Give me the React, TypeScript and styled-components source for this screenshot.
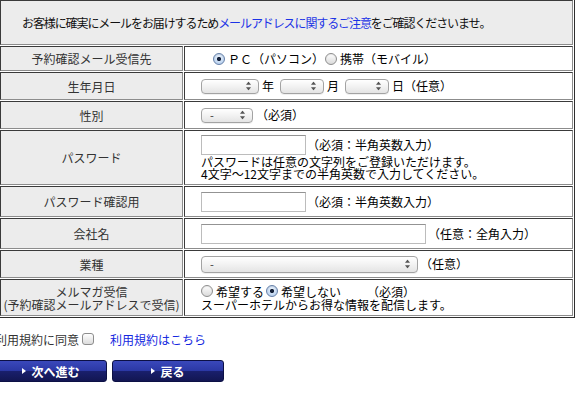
import React from "react";
import styled, { createGlobalStyle } from "styled-components";

const GlobalStyle = createGlobalStyle`
	html, body {
		margin: 0;
		padding: 0;
		background: #fff;
	}
	body {
		font-family: "Noto Sans CJK JP", "Noto Sans", sans-serif;
		font-size: 12px;
		color: #111;
		overflow: hidden;
	}
`;

const Page = styled.div`
	margin: -2px 0 0 -5px;
	width: 590px;
`;

const FormTable = styled.table`
	margin-left: 3px;
	width: 577px;
	border-collapse: separate;
	border-spacing: 1px;
	border: 1px solid;
	border-color: #c4c4c4 #2e2e2e #2e2e2e #c4c4c4;
`;

const Row = styled.tr<{ $h: number }>`
	height: ${(p) => p.$h}px;
`;

const Cell = styled.td`
	box-sizing: border-box;
	border: 1px solid;
	border-color: #3a3a3a #8c8c8c #8c8c8c #3a3a3a;
	padding: 0;
	vertical-align: middle;
`;

const HeadCell = styled(Cell)`
	background: #ececec;
	padding-left: 21px;
	letter-spacing: -1.1px;
	white-space: nowrap;
	line-height: 14px;
	color: #111;
`;

const LabelCell = styled(Cell)`
	width: 183px;
	background: #ececec;
	text-align: center;
	color: #333;
	line-height: 13px;
	white-space: nowrap;
`;

const ValueCell = styled(Cell)`
	padding-left: 16px;
	background: #fff;
	line-height: 14px;
	color: #000;
	white-space: nowrap;
`;

const Line = styled.div`
	display: flex;
	align-items: center;
`;

const Help = styled.div`
	margin-top: 1px;
	line-height: 12px;
`;

const StackedLines = styled.div`
	line-height: 13px;
`;

const Note = styled.span<{ $gap?: number }>`
	margin-left: ${(p) => p.$gap ?? 0}px;
`;

const LinkText = styled.a`
	color: #1c33e6;
	text-decoration: none;
	cursor: pointer;
`;

const Choice = styled.label<{ $indent?: number }>`
	display: inline-flex;
	align-items: center;
	gap: 3px;
	margin-left: ${(p) => p.$indent ?? 0}px;
`;

const RadioInput = styled.input.attrs({ type: "radio" })`
	appearance: none;
	margin: 0;
	width: 12px;
	height: 12px;
	box-sizing: border-box;
	border-radius: 50%;
	border: 1px solid #8d8d8d;
	background: linear-gradient(#fefefe, #dadada);
	box-shadow: inset 0 1px 1px rgba(0, 0, 0, 0.08);

	&:checked {
		border-color: #6680a8;
		background: radial-gradient(circle, #16223a 0 1.8px, transparent 2.4px),
			radial-gradient(circle at 50% 35%, #eef5fd, #a9c6ea);
	}
`;

const CheckInput = styled.input.attrs({ type: "checkbox" })`
	appearance: none;
	margin: 0 0 0 3px;
	width: 12px;
	height: 12px;
	box-sizing: border-box;
	border-radius: 3px;
	border: 1px solid #8d8d8d;
	background: linear-gradient(#fefefe, #dcdcdc);
`;

const SelectWrap = styled.span<{ $w: number; $h?: number }>`
	position: relative;
	display: inline-block;
	flex: none;
	width: ${(p) => p.$w}px;
	height: ${(p) => p.$h ?? 16}px;
`;

const SelectBox = styled.select`
	appearance: none;
	display: block;
	width: 100%;
	height: 100%;
	box-sizing: border-box;
	margin: 0;
	border: 1px solid #a3a3a3;
	border-radius: 4px;
	background: linear-gradient(#ffffff, #f2f2f2 50%, #e4e4e4);
	box-shadow: 0 1px 0 rgba(0, 0, 0, 0.06);
	font-family: inherit;
	font-size: 11px;
	line-height: 12px;
	color: #333;
	padding: 0 0 0 8px;
`;

const Arrows = styled.svg`
	position: absolute;
	right: 8px;
	top: 50%;
	transform: translateY(-50%);
	pointer-events: none;
`;

const TextInput = styled.input.attrs({ type: "text" })<{ $w: number }>`
	flex: none;
	width: ${(p) => p.$w}px;
	height: 20px;
	box-sizing: border-box;
	margin: 0;
	border: 1px solid #bcbcbc;
	border-top-color: #939393;
	padding: 0 3px;
	font: inherit;
`;

const Unit = styled.span<{ $after?: number }>`
	margin: 0 ${(p) => p.$after ?? 0}px 0 3px;
`;

const AgreeRow = styled.div`
	display: flex;
	align-items: center;
	height: 16px;
	margin-top: 13px;
	color: #333;
`;

const AgreeLink = styled(LinkText)`
	margin-left: 16px;
	color: #1428e0;
`;

const ButtonRow = styled.div`
	display: flex;
	gap: 5px;
	margin-top: 13px;
`;

const NavButton = styled.button`
	width: 112px;
	height: 22px;
	box-sizing: border-box;
	padding: 0;
	border: 1px solid #0c1045;
	border-radius: 3px;
	background: linear-gradient(#3a48bb 0%, #2b38a5 48%, #191f6c 52%, #121652 100%);
	color: #fff;
	font-family: "Noto Sans CJK JP", sans-serif;
	font-size: 12px;
	font-weight: bold;
	display: inline-flex;
	align-items: center;
	justify-content: center;
	gap: 5px;
	cursor: pointer;
`;

const Select: React.FC<{ w: number; h?: number; value?: string }> = ({ w, h, value = "" }) => (
	<SelectWrap $w={w} $h={h}>
		<SelectBox defaultValue={value}>
			<option value={value}>{value}</option>
		</SelectBox>
		<Arrows width="5" height="9" viewBox="0 0 5 9">
			<polygon points="2.5,0 5,3.2 0,3.2" fill="#555" />
			<polygon points="0,5.8 5,5.8 2.5,9" fill="#555" />
		</Arrows>
	</SelectWrap>
);

const Play = () => (
	<svg width="4" height="6" viewBox="0 0 4 6">
		<polygon points="0,0 4,3 0,6" fill="#fff" />
	</svg>
);

const App: React.FC = () => {
	return (
		<Page>
			<GlobalStyle />
			<FormTable>
				<tbody>
					<Row $h={45}>
						<HeadCell colSpan={2}>
							お客様に確実にメールをお届けするため
							<LinkText>メールアドレスに関するご注意</LinkText>
							をご確認くださいませ。
						</HeadCell>
					</Row>
					<Row $h={25}>
						<LabelCell>予約確認メール受信先</LabelCell>
						<ValueCell>
							<Line>
								<Choice $indent={12}>
									<RadioInput name="mailto" defaultChecked />
									ＰＣ（パソコン）
								</Choice>
								<Choice $indent={1}>
									<RadioInput name="mailto" />
									携帯（モバイル）
								</Choice>
							</Line>
						</ValueCell>
					</Row>
					<Row $h={28}>
						<LabelCell>生年月日</LabelCell>
						<ValueCell>
							<Line>
								<Select w={58} h={15} />
								<Unit $after={6}>年</Unit>
								<Select w={44} h={15} />
								<Unit $after={6}>月</Unit>
								<Select w={44} h={15} />
								<Unit>日</Unit>
								<span>（任意）</span>
							</Line>
						</ValueCell>
					</Row>
					<Row $h={28}>
						<LabelCell>性別</LabelCell>
						<ValueCell>
							<Line>
								<Select w={52} h={15} value="-" />
								<Note $gap={3}>（必須）</Note>
							</Line>
						</ValueCell>
					</Row>
					<Row $h={55}>
						<LabelCell>パスワード</LabelCell>
						<ValueCell>
							<Line>
								<TextInput $w={105} />
								<Note $gap={1}>（必須：半角英数入力）</Note>
							</Line>
							<Help>
								パスワードは任意の文字列をご登録いただけます。
								<br />
								4文字〜12文字までの半角英数で入力してください。
							</Help>
						</ValueCell>
					</Row>
					<Row $h={31}>
						<LabelCell>パスワード確認用</LabelCell>
						<ValueCell>
							<Line>
								<TextInput $w={105} />
								<Note $gap={1}>（必須：半角英数入力）</Note>
							</Line>
						</ValueCell>
					</Row>
					<Row $h={31}>
						<LabelCell>会社名</LabelCell>
						<ValueCell>
							<Line>
								<TextInput $w={225} />
								<Note $gap={2}>（任意：全角入力）</Note>
							</Line>
						</ValueCell>
					</Row>
					<Row $h={28}>
						<LabelCell>業種</LabelCell>
						<ValueCell>
							<Line>
								<Select w={217} h={17} value="-" />
								<Note $gap={2}>（任意）</Note>
							</Line>
						</ValueCell>
					</Row>
					<Row $h={37}>
						<LabelCell>
							メルマガ受信
							<br />
							(予約確認メールアドレスで受信)
						</LabelCell>
						<ValueCell>
							<StackedLines>
								<Line>
									<Choice>
										<RadioInput name="magazine" />
										希望する
									</Choice>
									<Choice $indent={2}>
										<RadioInput name="magazine" defaultChecked />
										希望しない
									</Choice>
									<Note $gap={26}>（必須）</Note>
								</Line>
								スーパーホテルからお得な情報を配信します。
							</StackedLines>
						</ValueCell>
					</Row>
				</tbody>
			</FormTable>
			<AgreeRow>
				利用規約に同意
				<CheckInput />
				<AgreeLink>利用規約はこちら</AgreeLink>
			</AgreeRow>
			<ButtonRow>
				<NavButton type="button">
					<Play />
					次へ進む
				</NavButton>
				<NavButton type="button">
					<Play />
					戻る
				</NavButton>
			</ButtonRow>
		</Page>
	);
};

export default App;
